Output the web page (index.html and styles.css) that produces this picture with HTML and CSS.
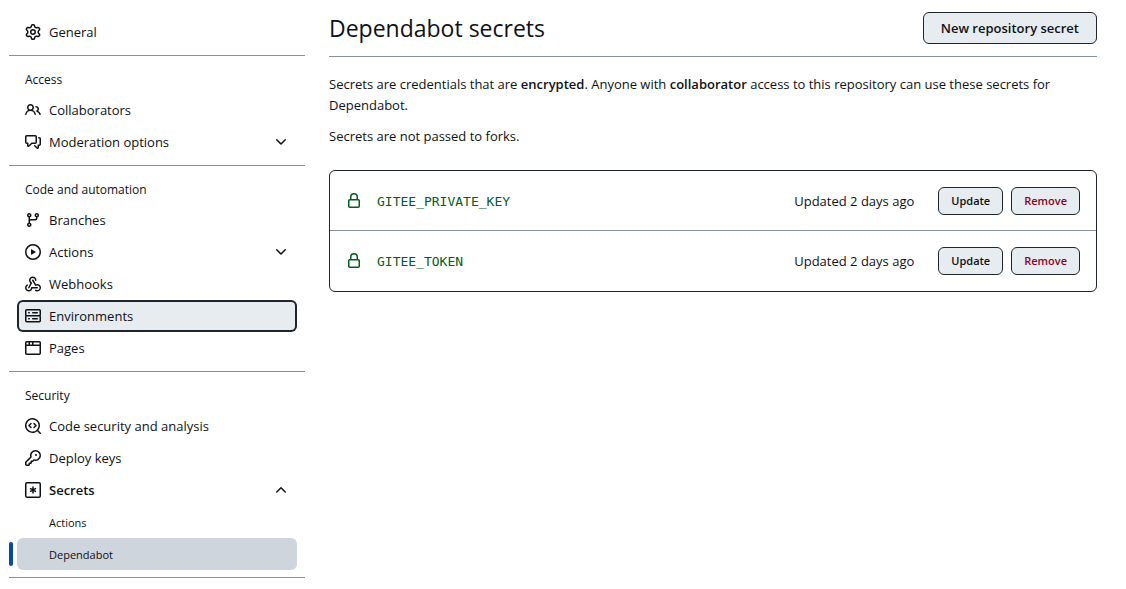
FILE: index.html
```html
<!DOCTYPE html>
<html lang="en">
<head>
<meta charset="utf-8">
<title>Dependabot secrets</title>
<link rel="stylesheet" href="styles.css">
</head>
<body>
<div class="layout">
  <nav class="sidebar" aria-label="Repository settings">
    <ul class="nav-list">
      <li><a class="nav-item" href="#"><svg class="icon" viewBox="0 0 16 16"><path d="M8 0a8.2 8.2 0 0 1 .701.031C9.444.095 9.99.645 10.16 1.29l.288 1.107c.018.066.079.158.212.224.231.114.454.243.668.386.123.082.233.09.299.071l1.103-.303c.644-.176 1.392.021 1.82.63.27.385.506.792.704 1.218.315.675.111 1.422-.364 1.891l-.814.806c-.049.048-.098.147-.088.294.016.257.016.515 0 .772-.01.147.038.246.088.294l.814.806c.475.469.679 1.216.364 1.891a7.977 7.977 0 0 1-.704 1.217c-.428.61-1.176.807-1.82.63l-1.102-.302c-.067-.019-.177-.011-.3.071a5.909 5.909 0 0 1-.668.386c-.133.066-.194.158-.211.224l-.29 1.106c-.168.646-.715 1.196-1.458 1.26a8.006 8.006 0 0 1-1.402 0c-.743-.064-1.289-.614-1.458-1.26l-.289-1.106c-.018-.066-.079-.158-.212-.224a5.738 5.738 0 0 1-.668-.386c-.123-.082-.233-.09-.299-.071l-1.103.303c-.644.176-1.392-.021-1.82-.63a8.12 8.12 0 0 1-.704-1.218c-.315-.675-.111-1.422.363-1.891l.815-.806c.05-.048.098-.147.088-.294a6.214 6.214 0 0 1 0-.772c.01-.147-.038-.246-.088-.294l-.815-.806C.635 6.045.431 5.298.746 4.623a7.92 7.92 0 0 1 .704-1.217c.428-.61 1.176-.807 1.82-.63l1.102.302c.067.019.177.011.3-.071.214-.143.437-.272.668-.386.133-.066.194-.158.211-.224l.29-1.106C6.009.645 6.556.095 7.299.03 7.53.01 7.764 0 8 0Zm-.571 1.525c-.036.003-.108.036-.137.146l-.289 1.105c-.147.561-.549.967-.998 1.189-.173.086-.34.183-.5.29-.417.278-.97.423-1.529.27l-1.103-.303c-.109-.03-.175.016-.195.045-.22.312-.412.644-.573.99-.014.031-.021.11.059.19l.815.806c.411.406.562.957.53 1.456a4.709 4.709 0 0 0 0 .582c.032.499-.119 1.05-.53 1.456l-.815.806c-.081.08-.073.159-.059.19.162.346.353.677.573.989.02.03.085.076.195.046l1.102-.303c.56-.153 1.113-.008 1.53.27.161.107.328.204.501.29.447.222.85.629.997 1.189l.289 1.105c.029.109.101.143.137.146a6.6 6.6 0 0 0 1.142 0c.036-.003.108-.036.137-.146l.289-1.105c.147-.561.549-.967.998-1.189.173-.086.34-.183.5-.29.417-.278.97-.423 1.529-.27l1.103.303c.109.029.175-.016.195-.045.22-.313.411-.644.573-.99.014-.031.021-.11-.059-.19l-.815-.806c-.411-.406-.562-.957-.53-1.456a4.709 4.709 0 0 0 0-.582c-.032-.499.119-1.05.53-1.456l.815-.806c.081-.08.073-.159.059-.19a6.464 6.464 0 0 0-.573-.989c-.02-.03-.085-.076-.195-.046l-1.102.303c-.56.153-1.113.008-1.53-.27a4.44 4.44 0 0 0-.501-.29c-.447-.222-.85-.629-.997-1.189l-.289-1.105c-.029-.11-.101-.143-.137-.146a6.6 6.6 0 0 0-1.142 0ZM11 8a3 3 0 1 1-6 0 3 3 0 0 1 6 0ZM9.5 8a1.5 1.5 0 1 0-3.001.001A1.5 1.5 0 0 0 9.5 8Z"/></svg><span>General</span></a></li>
    </ul>

    <h2 class="nav-heading">Access</h2>
    <ul class="nav-list">
      <li><a class="nav-item" href="#"><svg class="icon" viewBox="0 0 16 16"><path d="M2 5.5a3.5 3.5 0 1 1 5.898 2.549 5.508 5.508 0 0 1 3.034 4.084.75.75 0 1 1-1.482.235 4 4 0 0 0-7.9 0 .75.75 0 0 1-1.482-.236A5.507 5.507 0 0 1 3.102 8.05 3.493 3.493 0 0 1 2 5.5ZM11 4a3.001 3.001 0 0 1 2.22 5.018 5.01 5.01 0 0 1 2.56 3.012.749.749 0 0 1-.885.954.752.752 0 0 1-.549-.514 3.507 3.507 0 0 0-2.522-2.372.75.75 0 0 1-.574-.73v-.352a.75.75 0 0 1 .416-.672A1.5 1.5 0 0 0 11 5.5.75.75 0 0 1 11 4Zm-5.5-.5a2 2 0 1 0-.001 3.999A2 2 0 0 0 5.5 3.5Z"/></svg><span>Collaborators</span></a></li>
      <li><button class="nav-item" type="button" aria-expanded="false"><svg class="icon" viewBox="0 0 16 16"><path d="M1.75 1h8.5c.966 0 1.75.784 1.75 1.75v5.5A1.75 1.75 0 0 1 10.25 10H7.061l-2.574 2.573A1.458 1.458 0 0 1 2 11.543V10h-.25A1.75 1.75 0 0 1 0 8.25v-5.5C0 1.784.784 1 1.75 1ZM1.5 2.75v5.5c0 .138.112.25.25.25h1a.75.75 0 0 1 .75.75v2.19l2.72-2.72a.749.749 0 0 1 .53-.22h3.5a.25.25 0 0 0 .25-.25v-5.5a.25.25 0 0 0-.25-.25h-8.5a.25.25 0 0 0-.25.25Zm13 2a.25.25 0 0 0-.25-.25h-.5a.75.75 0 0 1 0-1.5h.5c.966 0 1.75.784 1.75 1.75v5.5A1.75 1.75 0 0 1 14.25 12H14v1.543a1.458 1.458 0 0 1-2.487 1.03L9.22 12.28a.749.749 0 0 1 .326-1.275.749.749 0 0 1 .734.215l2.22 2.22v-2.19a.75.75 0 0 1 .75-.75h1a.25.25 0 0 0 .25-.25Z"/></svg><span>Moderation options</span><svg class="icon chevron" viewBox="0 0 16 16"><path d="M12.78 5.22a.749.749 0 0 1 0 1.06l-4.25 4.25a.749.749 0 0 1-1.06 0L3.22 6.28a.749.749 0 1 1 1.06-1.06L8 8.939l3.72-3.719a.749.749 0 0 1 1.06 0Z"/></svg></button></li>
    </ul>

    <h2 class="nav-heading">Code and automation</h2>
    <ul class="nav-list">
      <li><a class="nav-item" href="#"><svg class="icon" viewBox="0 0 16 16"><path d="M9.5 3.25a2.25 2.25 0 1 1 3 2.122V6A2.5 2.5 0 0 1 10 8.5H6a1 1 0 0 0-1 1v1.128a2.251 2.251 0 1 1-1.5 0V5.372a2.25 2.25 0 1 1 1.5 0v1.836A2.493 2.493 0 0 1 6 7h4a1 1 0 0 0 1-1v-.628A2.25 2.25 0 0 1 9.5 3.25Zm-6 0a.75.75 0 1 0 1.5 0 .75.75 0 0 0-1.5 0Zm8.25-.75a.75.75 0 1 0 0 1.5.75.75 0 0 0 0-1.5ZM4.25 12a.75.75 0 1 0 0 1.5.75.75 0 0 0 0-1.5Z"/></svg><span>Branches</span></a></li>
      <li><button class="nav-item" type="button" aria-expanded="false"><svg class="icon" viewBox="0 0 16 16"><path d="M8 0a8 8 0 1 1 0 16A8 8 0 0 1 8 0ZM1.5 8a6.5 6.5 0 1 0 13 0 6.5 6.5 0 0 0-13 0Zm4.879-2.773 4.264 2.559a.25.25 0 0 1 0 .428l-4.264 2.559A.25.25 0 0 1 6 10.559V5.442a.25.25 0 0 1 .379-.215Z"/></svg><span>Actions</span><svg class="icon chevron" viewBox="0 0 16 16"><path d="M12.78 5.22a.749.749 0 0 1 0 1.06l-4.25 4.25a.749.749 0 0 1-1.06 0L3.22 6.28a.749.749 0 1 1 1.06-1.06L8 8.939l3.72-3.719a.749.749 0 0 1 1.06 0Z"/></svg></button></li>
      <li><a class="nav-item" href="#"><svg class="icon" viewBox="0 0 16 16"><path d="M5.5 4.25a2.25 2.25 0 0 1 4.5 0 .75.75 0 0 0 1.5 0 3.75 3.75 0 1 0-6.14 2.889l-2.272 4.258a.75.75 0 0 0 1.324.706L7 7.25a.75.75 0 0 0-.309-1.015A2.25 2.25 0 0 1 5.5 4.25Z"/><path d="M7.364 3.607a.75.75 0 0 1 1.03.257l2.608 4.349a3.75 3.75 0 1 1-.628 6.785.75.75 0 0 1 .752-1.299 2.25 2.25 0 1 0-.033-3.88.75.75 0 0 1-1.03-.256L7.107 4.636a.75.75 0 0 1 .257-1.03Z"/><path d="M2.9 8.776A.75.75 0 0 1 2.625 9.8 2.25 2.25 0 1 0 6 11.75a.75.75 0 0 1 .75-.751h5.5a.75.75 0 0 1 0 1.5H7.425a3.751 3.751 0 1 1-5.55-3.998.75.75 0 0 1 1.024.274Z"/></svg><span>Webhooks</span></a></li>
      <li><a class="nav-item nav-item-focused" href="#"><svg class="icon" viewBox="0 0 16 16"><path d="M1.75 1h12.5c.966 0 1.75.784 1.75 1.75v4c0 .372-.116.717-.314 1 .198.283.314.628.314 1v4a1.75 1.75 0 0 1-1.75 1.75H1.75A1.75 1.75 0 0 1 0 12.75v-4c0-.358.109-.707.314-1a1.739 1.739 0 0 1-.314-1v-4C0 1.784.784 1 1.75 1ZM1.5 2.75v4c0 .138.112.25.25.25h12.5a.25.25 0 0 0 .25-.25v-4a.25.25 0 0 0-.25-.25H1.75a.25.25 0 0 0-.25.25Zm.25 5.75a.25.25 0 0 0-.25.25v4c0 .138.112.25.25.25h12.5a.25.25 0 0 0 .25-.25v-4a.25.25 0 0 0-.25-.25ZM7 4.75A.75.75 0 0 1 7.75 4h4.5a.75.75 0 0 1 0 1.5h-4.5A.75.75 0 0 1 7 4.75ZM7.75 10h4.5a.75.75 0 0 1 0 1.5h-4.5a.75.75 0 0 1 0-1.5ZM3 4.75A.75.75 0 0 1 3.75 4h.5a.75.75 0 0 1 0 1.5h-.5A.75.75 0 0 1 3 4.75ZM3.75 10h.5a.75.75 0 0 1 0 1.5h-.5a.75.75 0 0 1 0-1.5Z"/></svg><span>Environments</span></a></li>
      <li><a class="nav-item" href="#"><svg class="icon" viewBox="0 0 16 16"><path d="M0 2.75C0 1.784.784 1 1.75 1h12.5c.966 0 1.75.784 1.75 1.75v10.5A1.75 1.75 0 0 1 14.25 15H1.75A1.75 1.75 0 0 1 0 13.25ZM14.5 6h-13v7.25c0 .138.112.25.25.25h12.5a.25.25 0 0 0 .25-.25Zm-6-3.5v2h6V2.75a.25.25 0 0 0-.25-.25ZM5 2.5v2h2v-2Zm-3.25 0a.25.25 0 0 0-.25.25V4.5h2v-2Z"/></svg><span>Pages</span></a></li>
    </ul>

    <h2 class="nav-heading">Security</h2>
    <ul class="nav-list">
      <li><a class="nav-item" href="#"><svg class="icon" viewBox="0 0 16 16"><path d="M8.47 4.97a.75.75 0 0 0 0 1.06L9.94 7.5 8.47 8.97a.75.75 0 1 0 1.06 1.06l2-2a.75.75 0 0 0 0-1.06l-2-2a.75.75 0 0 0-1.06 0ZM6.53 6.03a.75.75 0 0 0-1.06-1.06l-2 2a.75.75 0 0 0 0 1.06l2 2a.75.75 0 1 0 1.06-1.06L5.06 7.5l1.47-1.47Z"/><path d="M12.246 13.307a7.5 7.5 0 1 1 1.06-1.06l2.474 2.473a.749.749 0 0 1-.326 1.275.749.749 0 0 1-.734-.215ZM1.5 7.5a6.002 6.002 0 0 0 3.608 5.504 6.002 6.002 0 0 0 6.486-1.117.748.748 0 0 1 .292-.293A6 6 0 1 0 1.5 7.5Z"/></svg><span>Code security and analysis</span></a></li>
      <li><a class="nav-item" href="#"><svg class="icon" viewBox="0 0 16 16"><path d="M10.5 0a5.499 5.499 0 1 1-1.288 10.848l-.932.932a.749.749 0 0 1-.53.22H7v.75a.749.749 0 0 1-.22.53l-.5.5a.749.749 0 0 1-.53.22H5v.75a.749.749 0 0 1-.22.53l-.5.5a.749.749 0 0 1-.53.22h-2A1.75 1.75 0 0 1 0 14.25v-2c0-.199.079-.389.22-.53l4.932-4.932A5.5 5.5 0 0 1 10.5 0Zm-4 5.5c-.001.431.069.86.205 1.269a.75.75 0 0 1-.181.768L1.5 12.56v1.69c0 .138.112.25.25.25h1.69l.06-.06v-1.19a.75.75 0 0 1 .75-.75h1.19l.06-.06v-1.19a.75.75 0 0 1 .75-.75h1.19l1.023-1.025a.75.75 0 0 1 .768-.18A4 4 0 1 0 6.5 5.5ZM11 6a1 1 0 1 1 0-2 1 1 0 0 1 0 2Z"/></svg><span>Deploy keys</span></a></li>
      <li>
        <button class="nav-item nav-item-open" type="button" aria-expanded="true"><svg class="icon icon-stroke" viewBox="0 0 16 16"><rect x=".75" y=".75" width="14.5" height="14.5" rx="1.25"/><path d="M8 4.5v7M5 6.3l6 3.4M11 6.3 5 9.7"/></svg><span>Secrets</span><svg class="icon chevron" viewBox="0 0 16 16"><path d="M3.22 10.53a.749.749 0 0 1 0-1.06l4.25-4.25a.749.749 0 0 1 1.06 0l4.25 4.25a.749.749 0 1 1-1.06 1.06L8 6.811 4.28 10.53a.749.749 0 0 1-1.06 0Z"/></svg></button>
        <ul class="nav-list nav-sublist">
          <li><a class="nav-item" href="#">Actions</a></li>
          <li class="nav-current"><a class="nav-item" href="#" aria-current="page">Dependabot</a></li>
        </ul>
      </li>
    </ul>
    <hr class="nav-end">
  </nav>

  <main class="content">
    <header class="page-header">
      <h1 class="page-title">Dependabot secrets</h1>
      <button class="btn" type="button">New repository secret</button>
    </header>
    <p class="note">Secrets are credentials that are <strong>encrypted</strong>. Anyone with <strong>collaborator</strong> access to this repository can use these secrets for Dependabot.</p>
    <p class="note">Secrets are not passed to forks.</p>
    <ul class="secret-list">
      <li class="secret-row">
        <svg class="icon secret-icon" viewBox="0 0 16 16"><path d="M4 4a4 4 0 0 1 8 0v2h.25c.966 0 1.75.784 1.75 1.75v5.5A1.75 1.75 0 0 1 12.25 15h-8.5A1.75 1.75 0 0 1 2 13.25v-5.5C2 6.784 2.784 6 3.75 6H4Zm8.25 3.5h-8.5a.25.25 0 0 0-.25.25v5.5c0 .138.112.25.25.25h8.5a.25.25 0 0 0 .25-.25v-5.5a.25.25 0 0 0-.25-.25ZM10.5 6V4a2.5 2.5 0 1 0-5 0v2Z"/></svg>
        <code class="secret-name">GITEE_PRIVATE_KEY</code>
        <span class="secret-date">Updated 2 days ago</span>
        <div class="secret-actions">
          <button class="btn btn-small" type="button">Update</button>
          <button class="btn btn-small btn-danger" type="button">Remove</button>
        </div>
      </li>
      <li class="secret-row">
        <svg class="icon secret-icon" viewBox="0 0 16 16"><path d="M4 4a4 4 0 0 1 8 0v2h.25c.966 0 1.75.784 1.75 1.75v5.5A1.75 1.75 0 0 1 12.25 15h-8.5A1.75 1.75 0 0 1 2 13.25v-5.5C2 6.784 2.784 6 3.75 6H4Zm8.25 3.5h-8.5a.25.25 0 0 0-.25.25v5.5c0 .138.112.25.25.25h8.5a.25.25 0 0 0 .25-.25v-5.5a.25.25 0 0 0-.25-.25ZM10.5 6V4a2.5 2.5 0 1 0-5 0v2Z"/></svg>
        <code class="secret-name">GITEE_TOKEN</code>
        <span class="secret-date">Updated 2 days ago</span>
        <div class="secret-actions">
          <button class="btn btn-small" type="button">Update</button>
          <button class="btn btn-small btn-danger" type="button">Remove</button>
        </div>
      </li>
    </ul>
  </main>
</div>
</body>
</html>
```
FILE: styles.css
```css
* {
  box-sizing: border-box;
}

body {
  margin: 0;
  background: #fff;
  color: #0e1116;
  font-family: "Segoe UI", "Open Sans", "Noto Sans", sans-serif;
  font-size: 13px;
  line-height: 21px;
}

.layout {
  display: grid;
  grid-template-columns: 296px minmax(0, 1fr);
  gap: 24px;
  padding: 12px 29px 11px 9px;
}

.icon {
  flex: none;
  width: 16px;
  height: 16px;
  fill: currentColor;
}

.icon-stroke {
  fill: none;
  stroke: currentColor;
  stroke-width: 1.5;
}

.sidebar {
  padding-top: 4px;
}

.nav-list {
  margin: 0;
  padding: 0 8px;
  list-style: none;
}

.nav-sublist {
  padding: 0;
}

.nav-heading {
  margin: 7px 0 0;
  padding: 15px 16px 5px;
  border-top: 1px solid #88929d;
  font-size: 12px;
  line-height: 18px;
  font-weight: 500;
}

.nav-item {
  display: flex;
  align-items: center;
  gap: 8px;
  width: 100%;
  height: 32px;
  padding: 0 8px;
  border: 0;
  border-radius: 6px;
  background: none;
  color: inherit;
  font: inherit;
  text-align: left;
  text-decoration: none;
}

.nav-item-focused {
  background: #e7ecf0;
  box-shadow: inset 0 0 0 2px #20252c;
}

.nav-item-open {
  font-weight: 600;
}

.chevron {
  margin-left: auto;
}

.nav-sublist .nav-item {
  padding-left: 32px;
  font-size: 11px;
}

.nav-current {
  position: relative;
}

.nav-current .nav-item {
  background: #ced5dc;
}

.nav-current::before {
  content: "";
  position: absolute;
  top: 4px;
  bottom: 4px;
  left: -8px;
  width: 4px;
  border-radius: 6px;
  background: #0349b4;
}

.nav-end {
  margin: 7px 0 0;
  border: 0;
  border-top: 1px solid #88929d;
}

.page-header {
  display: flex;
  justify-content: space-between;
  align-items: flex-start;
  margin-bottom: 17px;
  padding-bottom: 12px;
  border-bottom: 1px solid #88929d;
}

.page-title {
  margin: 0;
  font-size: 23px;
  line-height: 32px;
  font-weight: 400;
}

.btn {
  height: 32px;
  padding: 0 17px;
  border: 1px solid #20252c;
  border-radius: 6px;
  background: #e7ecf0;
  color: inherit;
  font-family: inherit;
  font-size: 13px;
  line-height: 20px;
  font-weight: 600;
  white-space: nowrap;
}

.btn-small {
  height: 28px;
  padding: 0 12px;
  font-size: 11px;
}

.btn-danger {
  color: #86061d;
}

.note {
  margin: 0 0 10px;
}

.note strong {
  font-weight: 600;
}

.secret-list {
  margin: 23px 0 0;
  padding: 0;
  border: 1px solid #20252c;
  border-radius: 6px;
  list-style: none;
}

.secret-row {
  display: flex;
  align-items: center;
  padding: 16px;
}

.secret-row + .secret-row {
  margin-top: -1px;
  border-top: 1px solid #88929d;
}

.secret-icon,
.secret-name {
  color: #055d20;
}

.secret-name {
  margin-left: 15px;
  font-family: "DejaVu Sans Mono", monospace;
  font-size: 13px;
}

.secret-date {
  margin-left: auto;
}

.secret-actions {
  display: flex;
  gap: 8px;
  margin-left: 24px;
}
```
